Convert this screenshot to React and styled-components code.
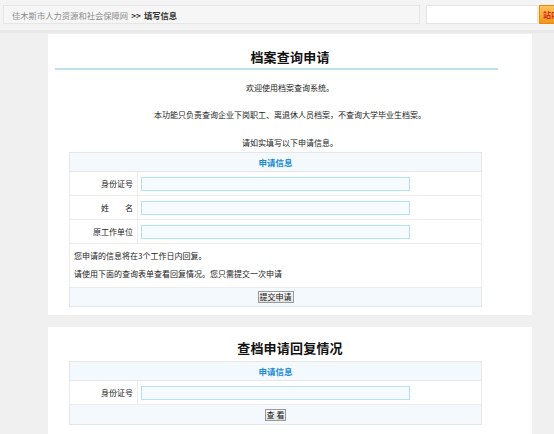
import React from "react";
import styled, { createGlobalStyle } from "styled-components";

const GlobalStyle = createGlobalStyle`
  html, body {
    margin: 0;
    padding: 0;
    overflow: hidden;
    background: #f0f0f0;
    font-family: "Noto Sans CJK SC", "Liberation Sans", sans-serif;
    font-size: 8px;
    color: #333;
  }
`;

const TopBar = styled.div`
  display: flex;
  align-items: flex-start;
  height: 33px;
  padding-top: 5px;
  box-sizing: border-box;
  background: #f4f4f4;
  border-bottom: 3px solid #e9e9e9;
`;

const Breadcrumb = styled.div`
  margin-left: 3px;
  width: 417px;
  height: 19px;
  flex-shrink: 0;
  box-sizing: border-box;
  border: 1px solid #e6e6e6;
  background: #f6f6f6;
  padding-left: 8px;
  display: flex;
  align-items: center;
  gap: 3px;
  font-size: 8.3px;
  line-height: 12px;
`;

const Crumb = styled.span`
  color: ${(p) => (p.$current ? "#333" : "#8a8a8a")};
  font-weight: ${(p) => (p.$current ? 700 : 400)};
`;

const SearchInput = styled.input`
  margin: 0 0 0 6px;
  width: 112px;
  height: 19px;
  flex-shrink: 0;
  box-sizing: border-box;
  border: 1px solid #e4e4e4;
  background: #fff;
  padding: 0;
`;

const SearchButton = styled.button`
  margin-left: 1px;
  width: 44px;
  height: 19px;
  flex-shrink: 0;
  box-sizing: border-box;
  border: 1px solid #e28a14;
  background: linear-gradient(#fdc45e, #f29818);
  color: #d42a1a;
  font-family: inherit;
  font-weight: 700;
  font-size: 8px;
  text-align: left;
  padding: 0 0 0 3px;
  white-space: nowrap;
`;

const Main = styled.div`
  padding: 1px 0 0 48px;
`;

const Panel = styled.div`
  width: 484px;
  box-sizing: border-box;
  background: #fff;
  padding: ${(p) => p.$pad};
  margin-bottom: 12px;
`;

const Title = styled.h2`
  margin: 0;
  text-align: center;
  font-size: 13px;
  line-height: 18px;
  font-weight: 700;
  color: #111;
  letter-spacing: 0.2px;
`;

const Rule = styled.div`
  height: 2px;
  background: #bfe0eb;
  margin: 2px 34px 0 7px;
`;

const Para = styled.p`
  margin: ${(p) => p.$top}px 0 0;
  text-align: center;
  line-height: 12px;
  font-size: 8px;
  color: #222;
`;

const Table = styled.table`
  margin: ${(p) => p.$top}px 0 0 21px;
  width: 413px;
  border-collapse: collapse;
  border: 1px solid #e6e6e6;
  font-size: 8px;
`;

const HeadCell = styled.th`
  height: 18px;
  padding: 0;
  background: #f4f9fd;
  color: #1b8bd4;
  font-weight: 700;
  font-size: 8.5px;
  text-align: center;
  border: 1px solid #e6e6e6;
`;

const LabelCell = styled.td`
  width: 63px;
  height: 23px;
  padding: 0 4px 0 0;
  text-align: right;
  color: #222;
  border: 1px solid #ececec;
  white-space: pre;
`;

const FieldCell = styled.td`
  height: 23px;
  padding: 0 0 0 3px;
  border: 1px solid #ececec;
`;

const Field = styled.input`
  display: block;
  width: 269px;
  height: 14px;
  box-sizing: border-box;
  border: 1px solid #b5e2f5;
  background: #f5fbff;
  padding: 0;
  margin: 0;
`;

const NoteCell = styled.td`
  padding: 3px 4px 4px;
  line-height: 18px;
  color: #222;
  border: 1px solid #ececec;
`;

const ActionCell = styled.td`
  height: ${(p) => p.$h}px;
  padding: 0;
  background: #f4f9fd;
  text-align: center;
  border: 1px solid #e6e6e6;
`;

const Button = styled.button`
  height: 12px;
  padding: 0 1px;
  font-family: inherit;
  font-size: 8px;
  line-height: 10px;
  color: #111;
  border: 1px solid #9a9a9a;
  background: linear-gradient(#fafafa, #e2e2e2);
  vertical-align: middle;
`;

const App = () => {
  return (
    <>
      <GlobalStyle />
      <TopBar>
        <Breadcrumb>
          <Crumb>佳木斯市人力资源和社会保障网</Crumb>
          <Crumb $current>&gt;&gt;</Crumb>
          <Crumb $current>填写信息</Crumb>
        </Breadcrumb>
        <SearchInput type="text" />
        <SearchButton>站内搜索</SearchButton>
      </TopBar>
      <Main>
        <Panel $pad="14px 0 8px">
          <Title>档案查询申请</Title>
          <Rule />
          <Para $top={12}>欢迎使用档案查询系统。</Para>
          <Para $top={15}>本功能只负责查询企业下岗职工、离退休人员档案，不查询大学毕业生档案。</Para>
          <Para $top={16}>请如实填写以下申请信息。</Para>
          <Table $top={3}>
            <tbody>
              <tr>
                <HeadCell colSpan={2}>申请信息</HeadCell>
              </tr>
              <tr>
                <LabelCell>身份证号</LabelCell>
                <FieldCell><Field type="text" /></FieldCell>
              </tr>
              <tr>
                <LabelCell>{"姓　　名"}</LabelCell>
                <FieldCell><Field type="text" /></FieldCell>
              </tr>
              <tr>
                <LabelCell>原工作单位</LabelCell>
                <FieldCell><Field type="text" /></FieldCell>
              </tr>
              <tr>
                <NoteCell colSpan={2}>
                  您申请的信息将在3个工作日内回复。<br />
                  请使用下面的查询表单查看回复情况。您只需提交一次申请
                </NoteCell>
              </tr>
              <tr>
                <ActionCell colSpan={2} $h={18}>
                  <Button>提交申请</Button>
                </ActionCell>
              </tr>
            </tbody>
          </Table>
        </Panel>
        <Panel $pad="12px 0 9px">
          <Title>查档申请回复情况</Title>
          <Table $top={4}>
            <tbody>
              <tr>
                <HeadCell colSpan={2}>申请信息</HeadCell>
              </tr>
              <tr>
                <LabelCell>身份证号</LabelCell>
                <FieldCell><Field type="text" /></FieldCell>
              </tr>
              <tr>
                <ActionCell colSpan={2} $h={19}>
                  <Button>查 看</Button>
                </ActionCell>
              </tr>
            </tbody>
          </Table>
        </Panel>
      </Main>
    </>
  );
};

export default App;
